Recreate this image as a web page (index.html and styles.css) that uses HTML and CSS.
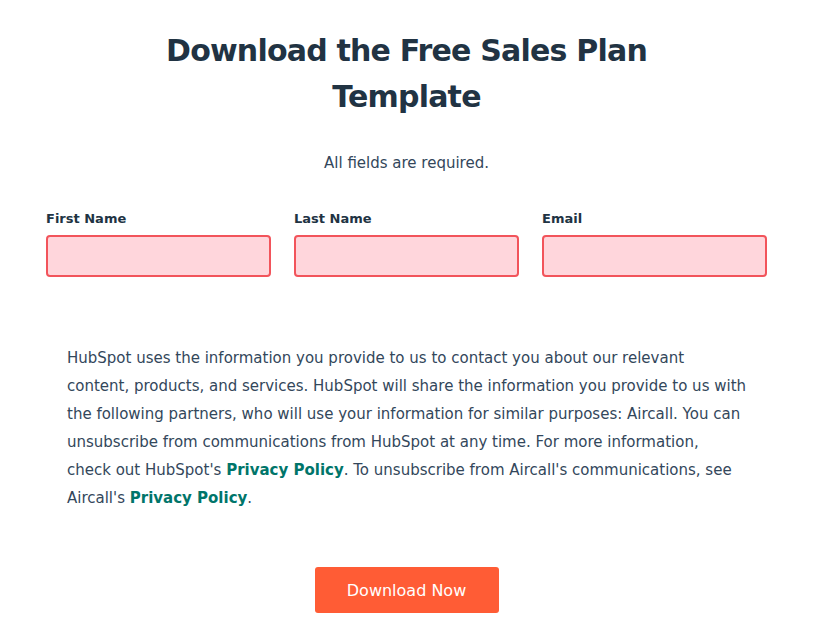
FILE: index.html
```html
<!DOCTYPE html>
<html lang="en">
  <head>
    <meta charset="UTF-8" />
    <meta name="viewport" content="width=device-width, initial-scale=1.0" />
    <title>Download the Free Sales Plan Template</title>
    <link rel="stylesheet" href="styles.css">
  </head>
  <body>
    <div class="form-wrap">
      <h1 class="form-title">Download the Free Sales Plan<br />Template</h1>
      <p class="form-note">All fields are required.</p>
      <form class="form">
        <div class="fields">
          <div class="field">
            <label for="firstname">First Name</label>
            <input id="firstname" type="text" />
          </div>
          <div class="field">
            <label for="lastname">Last Name</label>
            <input id="lastname" type="text" />
          </div>
          <div class="field">
            <label for="email">Email</label>
            <input id="email" type="email" />
          </div>
        </div>
        <p class="legal">
          HubSpot uses the information you provide to us to contact you about our relevant<br />
          content, products, and services. HubSpot will share the information you provide to us with<br />
          the following partners, who will use your information for similar purposes: Aircall. You can<br />
          unsubscribe from communications from HubSpot at any time. For more information,<br />
          check out HubSpot's <a href="#">Privacy Policy</a>. To unsubscribe from Aircall's communications, see<br />
          Aircall's <a href="#">Privacy Policy</a>.
        </p>
        <div class="actions">
          <button type="button" class="btn">Download Now</button>
        </div>
      </form>
    </div>
  </body>
</html>
```

FILE: styles.css
```css
* {
  box-sizing: border-box;
}
body {
  margin: 0;
  background: #fff;
  color: #33475b;
  font-family: "DejaVu Sans", sans-serif;
}
.form-wrap {
  padding: 28px 49px 0 46px;
}
.form-title {
  margin: 0;
  text-align: center;
  color: #213343;
  font-size: 30px;
  letter-spacing: -0.8px;
  line-height: 46px;
  font-weight: 700;
}
.form-note {
  margin: 31px 0 0;
  text-align: center;
  font-size: 15px;
  line-height: 24px;
}
.fields {
  display: grid;
  grid-template-columns: 1fr 1fr 1fr;
  gap: 23px;
  margin-top: 34px;
}
.field label {
  display: block;
  color: #213343;
  font-size: 13px;
  font-weight: 700;
  line-height: 20px;
  margin-bottom: 6px;
}
.field input {
  display: block;
  width: 100%;
  height: 42px;
  background: #ffd6dc;
  border: 2px solid #f2545b;
  border-radius: 4px;
  outline: none;
}
.legal {
  margin: 67px 0 0;
  padding: 0 0 0 21px;
  font-size: 15px;
  line-height: 28px;
  white-space: nowrap;
}
.legal a {
  color: #00756a;
  font-weight: 700;
  text-decoration: none;
}
.actions {
  display: flex;
  justify-content: center;
  margin-top: 55px;
}
.btn {
  width: 184px;
  height: 46px;
  border: none;
  border-radius: 3px;
  background: #ff5c35;
  color: #fff;
  font-family: inherit;
  font-size: 16px;
  font-weight: 500;
  cursor: pointer;
}
```
